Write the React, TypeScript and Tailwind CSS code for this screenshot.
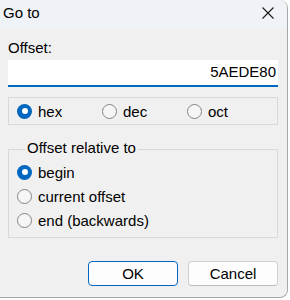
import React from "react";

const font = { fontFamily: '"Liberation Sans", Arial, sans-serif' };

const Radio = ({ checked, label }: { checked?: boolean; label: string }) => (
  <label className="flex items-center gap-[6px] h-[24px] text-[15px] leading-[15px] text-black">
    {checked ? (
      <span className="flex items-center justify-center w-[15px] h-[15px] rounded-full bg-[#0067c0]">
        <span className="w-[6px] h-[6px] rounded-full bg-white" />
      </span>
    ) : (
      <span className="w-[15px] h-[15px] rounded-full border border-[#858585] bg-[#f6f6f6]" />
    )}
    <span>{label}</span>
  </label>
);

const App = () => {
  return (
    <div className="w-[290px] h-[300px] bg-white" style={font}>
      <div className="w-[288px] h-[298px] flex flex-col bg-[#f0f0f0] border-r border-b border-[#a8a8a8] rounded-br-[8px] rounded-tr-[8px] overflow-hidden">
        {/* title bar */}
        <div className="flex justify-between items-start h-[29px] bg-[#eff3f7] pl-[3px] pr-[13px] pt-[5px]">
          <span className="text-[15px] leading-[15px] text-black">Go to</span>
          <svg width="12" height="12" viewBox="0 0 12 12" className="mt-[2px]">
            <path d="M0.5 0.5 L11.5 11.5 M11.5 0.5 L0.5 11.5" stroke="#1a1a1a" strokeWidth="1.1" />
          </svg>
        </div>

        <div className="flex flex-col pl-[8px] pr-[9px] pt-[11px]">
          <span className="text-[15px] leading-[15px] text-black">Offset:</span>
          <div className="mt-[5px] h-[27px] bg-white border-b-2 border-[#0067c0] flex justify-end items-start pt-[4px] pr-[2px] text-[15px] leading-[15px] text-black">
            5AEDE80
          </div>

          <div className="mt-[10px] h-[28px] border border-[#d9d9d9] grid grid-cols-[85px_85px_85px] items-center pl-[8px]">
            <Radio checked label="hex" />
            <Radio label="dec" />
            <Radio label="oct" />
          </div>

          <fieldset className="mt-[15px] border border-[#d9d9d9] pl-[8px] pt-[2px] pb-[4px] h-[98px] flex flex-col">
            <legend className="ml-[8px] px-[2px] pb-[3px] text-[15px] leading-[15px] text-black">
              Offset relative to
            </legend>
            <Radio checked label="begin" />
            <Radio label="current offset" />
            <Radio label="end (backwards)" />
          </fieldset>

          <div className="mt-[23px] flex justify-end gap-[10px]">
            <button className="w-[90px] h-[25px] rounded-[4px] border border-[#0067c0] bg-[#fdfdfd] text-[15px] leading-[15px] text-black">
              OK
            </button>
            <button className="w-[90px] h-[25px] rounded-[4px] border border-[#d0d0d0] border-b-[#bdbdbd] bg-[#fdfdfd] text-[15px] leading-[15px] text-black">
              Cancel
            </button>
          </div>
        </div>
      </div>
    </div>
  );
};

export default App;
